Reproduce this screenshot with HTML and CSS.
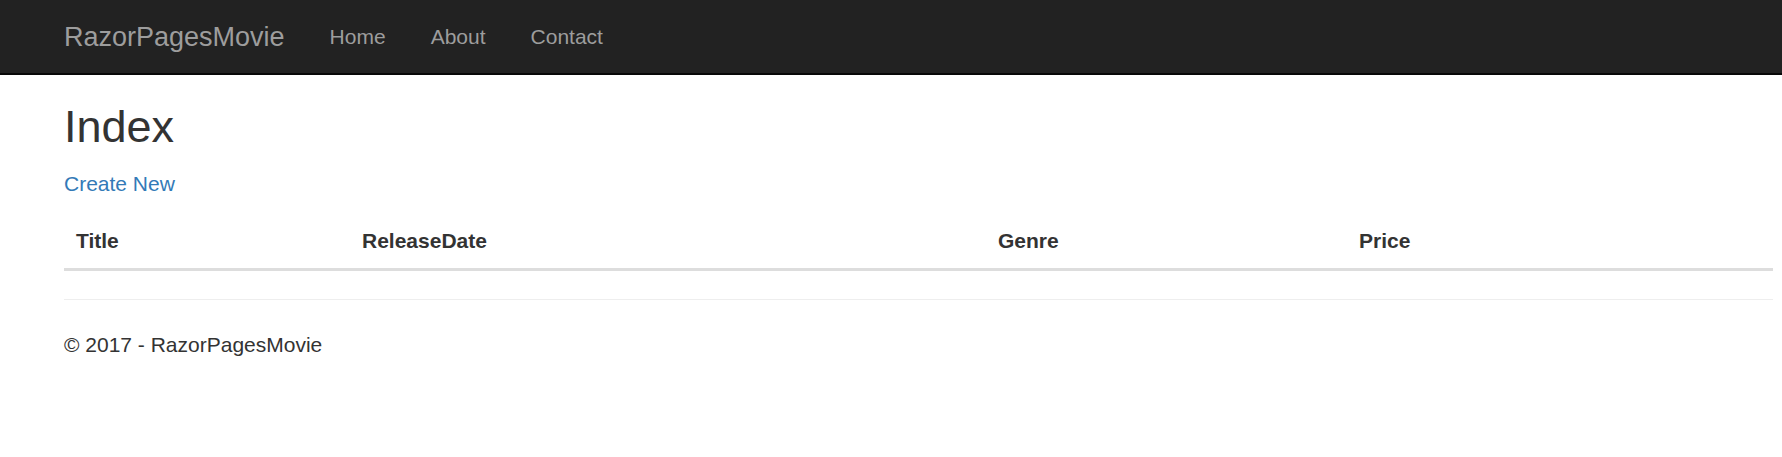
FILE: index.html
```html
<!DOCTYPE html>
<html lang="en">
<head>
<meta charset="utf-8">
<title>Index - RazorPagesMovie</title>
<link rel="stylesheet" href="styles.css">
</head>
<body>
<nav class="navbar">
  <div class="container nav-inner">
    <a class="brand" href="#">RazorPagesMovie</a>
    <ul class="nav-links">
      <li><a href="#">Home</a></li>
      <li><a href="#">About</a></li>
      <li><a href="#">Contact</a></li>
    </ul>
  </div>
</nav>
<div class="container body-content">
  <h2 class="page-title">Index</h2>
  <p class="create"><a href="#">Create New</a></p>
  <table class="table">
    <thead>
      <tr>
        <th class="col-title">Title</th>
        <th class="col-date">ReleaseDate</th>
        <th class="col-genre">Genre</th>
        <th class="col-price">Price</th>
        <th class="col-actions"></th>
      </tr>
    </thead>
    <tbody></tbody>
  </table>
  <hr class="divider">
  <footer class="footer">
    <p>&copy; 2017 - RazorPagesMovie</p>
  </footer>
</div>
</body>
</html>
```
FILE: styles.css
```css
html, body {
  margin: 0;
  padding: 0;
}
body {
  font-family: "Liberation Sans", Arial, sans-serif;
  font-size: 21px;
  line-height: 30px;
  color: #333;
  background: #fff;
}
a {
  color: #337ab7;
  text-decoration: none;
}
.container {
  padding-left: 64px;
  padding-right: 9px;
}
.navbar {
  background: #222;
  border-bottom: 2px solid #080808;
  height: 73px;
}
.nav-inner {
  display: flex;
  align-items: center;
  height: 73px;
}
.brand {
  color: #9d9d9d;
  font-size: 27px;
  line-height: 30px;
  padding: 0 22.5px;
  margin-left: -22.5px;
}
.nav-links {
  display: flex;
  list-style: none;
  margin: 0;
  padding: 0;
}
.nav-links a {
  display: block;
  color: #9d9d9d;
  padding: 0 22.5px;
  line-height: 30px;
}
.page-title {
  font-size: 45px;
  font-weight: 500;
  line-height: 1.1;
  margin: 27px 0 17px;
}
.create {
  margin: 0 0 15px;
}
.table {
  width: 100%;
  border-collapse: collapse;
  border-spacing: 0;
  table-layout: fixed;
}
.table th {
  box-sizing: border-box;
  text-align: left;
  font-weight: bold;
  padding: 12px;
  line-height: 30px;
  border-bottom: 3px solid #ddd;
  vertical-align: bottom;
}
.col-title { width: 286px; }
.col-date { width: 636px; }
.col-genre { width: 361px; }
.col-price { width: 200px; }
.divider {
  border: 0;
  border-top: 1px solid #eee;
  margin: 28px 0 30px;
}
.footer p {
  margin: 0 0 15px;
}
```
